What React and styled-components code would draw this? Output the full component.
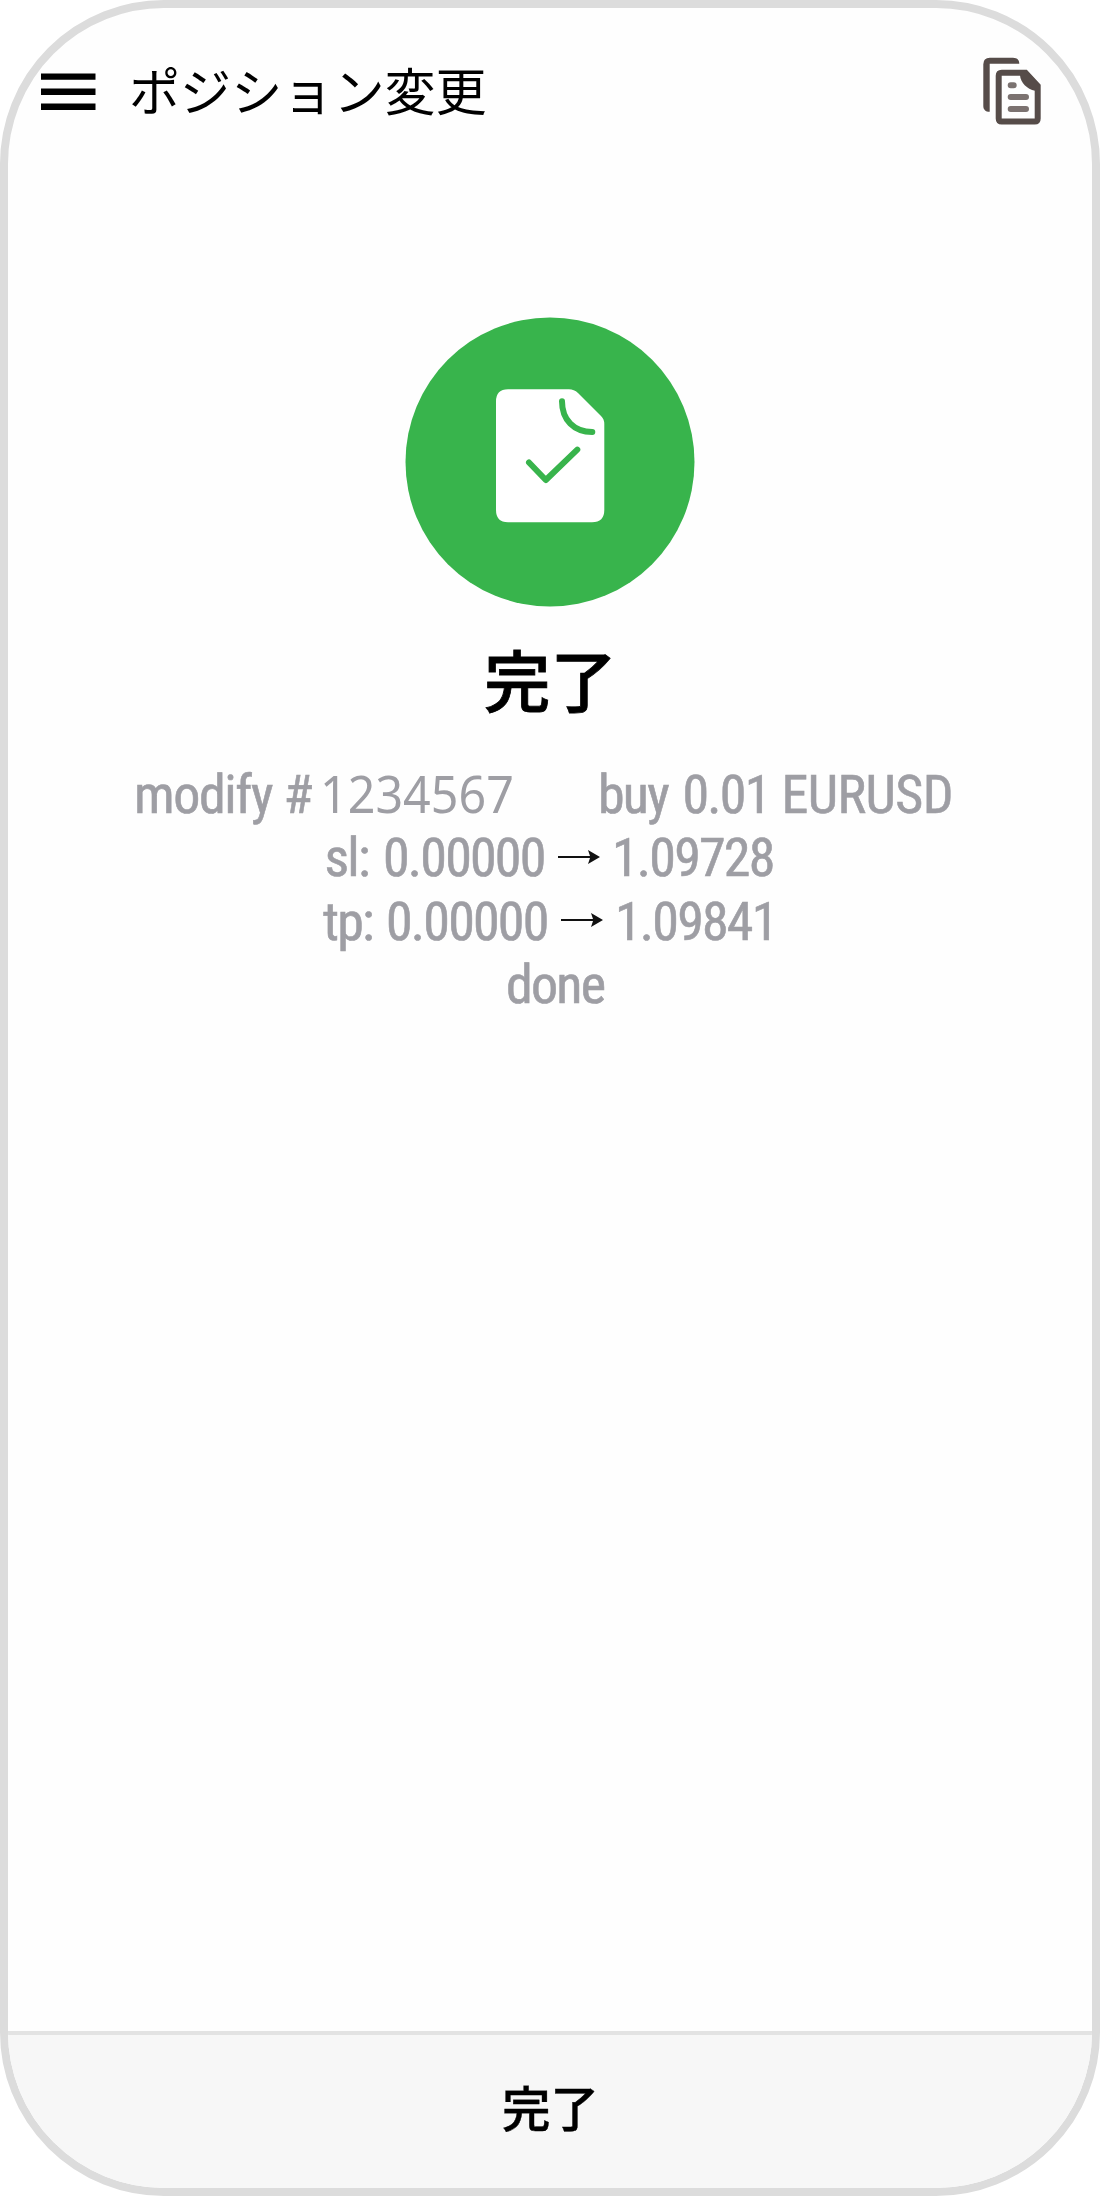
import React from 'react';
import styled, { createGlobalStyle } from 'styled-components';

const App = () => {
  return (
    <>
      <GlobalStyle />
      <Phone>
        <Header>
          <MenuIcon />
          <Title>ポジション変更</Title>
          <CopyIcon />
        </Header>
        <Result>
          <DoneIcon />
          <Heading>完了</Heading>
          <Details>
            <Line $left={126}>
              <Word $width={149.5} $spacing={-1.4}>modify</Word>
              <Word $width={36.5}>#</Word>
              <Ticket>1234567</Ticket>
              <Word $width={84.5}>buy</Word>
              <Word $width={99}>0.01</Word>
              <Word $width={180} $spacing={-0.6}>EURUSD</Word>
            </Line>
            <Line $left={316.5}>
              <Word $width={58.5}>sl:</Word>
              <Word $width={175}>0.00000</Word>
              <Arrow />
              <Word $width={170}>1.09728</Word>
            </Line>
            <Line $left={315}>
              <Word $width={63}>tp:</Word>
              <Word $width={175}>0.00000</Word>
              <Arrow />
              <Word $width={170}>1.09841</Word>
            </Line>
            <Line $left={498}>
              <Word $width={110}>done</Word>
            </Line>
          </Details>
        </Result>
        <Footer>完了</Footer>
      </Phone>
    </>
  );
};

const MenuIcon = () => (
  <MenuSvg viewBox="0 0 55 38">
    <path d="M0 0.4h54.5v6.4H0zM0 15.5h54.5v6.4H0zM0 30.5h54.5v6.4H0z" />
  </MenuSvg>
);

const CopyIcon = () => (
  <CopySvg viewBox="0 0 60 70" fill="none">
    <path
      d="M7.700 55.800C3.500 55.800 1.300 53.500 1.300 50V8.300Q1.300 1.800 7.800 1.800H31C35 1.800 37.300 4 37.300 7.800H7.700Z"
      fill="#564c49"
    />
    <path
      d="M19.700 16.800H43.500L55.700 30V62.500Q55.700 65.500 52.700 65.500H19.700Q16.700 65.500 16.700 62.500V19.800Q16.700 16.800 19.700 16.800Z"
      stroke="#564c49"
      strokeWidth="6"
    />
    <path d="M38 15H45L58 29V34.800H53C45 33 38.500 27 38 19Z" fill="#564c49" />
    <path
      d="M28.700 29.200h3M28.700 41h15.300M28.700 52.900h15.300"
      stroke="#7b7270"
      strokeWidth="6"
      strokeLinecap="round"
    />
  </CopySvg>
);

const DoneIcon = () => (
  <DoneSvg viewBox="0 0 290 290" fill="none">
    <circle cx="145" cy="145" r="144.5" fill="#38b44c" />
    <path
      d="M103 72.300H164Q169 72.300 173 76L196 99Q199.300 102 199.300 107V193Q199.300 205.300 187 205.300H103Q91 205.300 91 193V84.500Q91 72.300 103 72.300Z"
      fill="#fff"
    />
    <path
      d="M157 84.300C157 103 169 115 187.300 115M124 145.500L140.800 163L172.300 132.700"
      stroke="#38b44c"
      strokeWidth="6"
      strokeLinecap="round"
      strokeLinejoin="round"
    />
  </DoneSvg>
);

const Arrow = () => (
  <ArrowSvg viewBox="0 0 42 14">
    <path d="M0 6H32L30 0L42 7L30 14L32 8H0Z" />
  </ArrowSvg>
);

const GlobalStyle = createGlobalStyle`
  body {
    margin: 0;
    background-color: white;
  }
`;

const Phone = styled.div`
  box-sizing: border-box;
  display: flex;
  flex-direction: column;
  width: 1100px;
  height: 2196px;
  border: 8px solid #dcdcdc;
  border-radius: 164px;
  background-color: #fefefe;
  overflow: hidden;
  color: black;
  font-family: 'Noto Sans CJK JP', sans-serif;
`;

const Header = styled.header`
  display: flex;
  align-items: center;
  height: 167px;
  padding: 0 50px 0 33px;
`;

const Title = styled.h1`
  flex: 1;
  margin: 0 0 0 33px;
  padding-bottom: 5px;
  font-size: 51.100px;
  font-weight: 400;
  line-height: 76px;
  white-space: nowrap;
`;

const MenuSvg = styled.svg`
  width: 55px;
  height: 38px;
`;

const CopySvg = styled.svg`
  width: 60px;
  height: 70px;
  margin-bottom: 1px;
`;

const Result = styled.main`
  flex: 1;
  display: flex;
  flex-direction: column;
  align-items: center;
  padding-top: 142px;
`;

const DoneSvg = styled.svg`
  width: 290px;
  height: 290px;
`;

const Heading = styled.h2`
  margin: 21px 0 0;
  padding-left: 1px;
  font-size: 66.500px;
  font-weight: 500;
  line-height: 100px;
  -webkit-text-stroke: 0.8px black;
`;

const Details = styled.div`
  align-self: stretch;
  margin-top: 35px;
  color: #9e9ea4;
  font-family: Roboto, sans-serif;
  font-size: 54px;
  line-height: 63.300px;
`;

const Line = styled.div`
  display: flex;
  align-items: center;
  height: 63.300px;
  padding-left: ${(props) => props.$left}px;
  white-space: nowrap;
`;

const Word = styled.span`
  flex: none;
  width: ${(props) => props.$width}px;
  font-stretch: 75%;
  font-weight: 400;
  letter-spacing: ${(props) => props.$spacing ?? -1.8}px;
  -webkit-text-stroke: 0.6px #9e9ea4;
`;

const Ticket = styled.span`
  flex: none;
  width: 278px;
  margin-top: -3px;
  font-family: 'Noto Sans', sans-serif;
  font-size: 51.500px;
  transform: scaleX(0.94);
  transform-origin: left;
`;

const ArrowSvg = styled.svg`
  flex: none;
  width: 42px;
  height: 14px;
  margin-top: -2px;
  margin-right: 12px;
  fill: #111;
`;

const Footer = styled.footer`
  display: flex;
  align-items: center;
  justify-content: center;
  box-sizing: border-box;
  height: 157px;
  padding: 0 0 12px 1px;
  border-top: 4px solid #e3e3e3;
  background-color: #f7f7f7;
  font-size: 48.600px;
  font-weight: 500;
  -webkit-text-stroke: 0.4px black;
`;

export default App;
